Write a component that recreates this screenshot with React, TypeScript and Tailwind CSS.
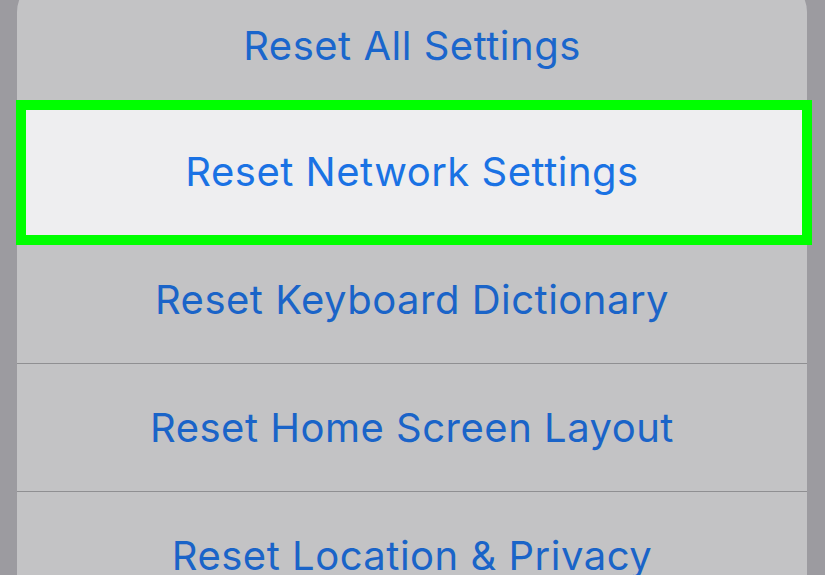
const rows = [
  "Reset Keyboard Dictionary",
  "Reset Home Screen Layout",
  "Reset Location & Privacy",
];

export default function App() {
  return (
    <div
      className="h-[575px] w-full overflow-hidden bg-[#9c9ba0] pl-[17px] pr-[18px]"
      style={{ fontFamily: "Inter, 'Liberation Sans', sans-serif" }}
    >
      <div className="-mt-[22px] rounded-t-[34px] bg-[#c3c3c5]">
        {/* Reset All Settings */}
        <div className="flex h-[130px] items-center justify-center pt-[6px]">
          <span className="text-[40px] tracking-[0.5px] text-[#1a66cc]">Reset All Settings</span>
        </div>

        {/* Highlighted row */}
        <div className="relative flex h-[128px] items-center justify-center bg-[#eeeef0]">
          <span className="text-[40px] tracking-[0.5px] text-[#1a72e4]">Reset Network Settings</span>
          <div className="pointer-events-none absolute -top-[8px] -bottom-[9px] -left-[1px] -right-[5px] border-[10px] border-[#00ff00]" />
        </div>

        {rows.map((label, i) => (
          <div
            key={label}
            className={`flex h-[128px] items-center justify-center ${
              i < rows.length - 1 ? "border-b border-[#8f8f92]" : ""
            }`}
          >
            <span className="text-[40px] tracking-[0.5px] text-[#1a64c8]">{label}</span>
          </div>
        ))}
      </div>
    </div>
  );
}
